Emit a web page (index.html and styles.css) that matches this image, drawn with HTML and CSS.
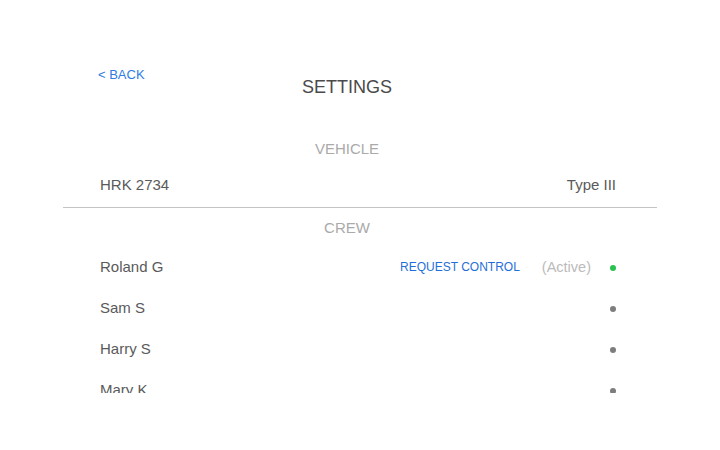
FILE: index.html
```html
<!DOCTYPE html>
<html lang="en">
<head>
    <meta charset="UTF-8">
    <meta name="viewport" content="width=device-width, initial-scale=1.0">
    <title>Settings</title>
    <link rel="stylesheet" href="styles.css">
</head>
<body>
    <div class="panel">
        <div class="header">
            <a class="back" href="#">&lt; BACK</a>
            <h1>SETTINGS</h1>
        </div>

        <h2 class="section-title vehicle-title">VEHICLE</h2>
        <div class="row vehicle-row">
            <span class="name">HRK 2734</span>
            <span class="value">Type III</span>
        </div>

        <h2 class="section-title crew-title">CREW</h2>
        <div class="crew-list">
            <div class="row">
                <span class="name">Roland G</span>
                <a class="request" href="#">REQUEST CONTROL</a>
                <span class="active">(Active)</span>
                <span class="dot online"></span>
            </div>
            <div class="row">
                <span class="name">Sam S</span>
                <span class="dot"></span>
            </div>
            <div class="row">
                <span class="name">Harry S</span>
                <span class="dot"></span>
            </div>
            <div class="row">
                <span class="name">Mary K</span>
                <span class="dot"></span>
            </div>
        </div>
    </div>
</body>
</html>
```

FILE: styles.css
```css
body {
    font-family: "Liberation Sans", Arial, sans-serif;
    margin: 0;
    padding-top: 67px;
    background: #fff;
    color: #5a5a5a;
}
.panel {
    margin: 0 63px;
}
.header {
    display: grid;
    grid-template-columns: 1fr auto 1fr;
    padding-right: 26px;
}
.back {
    margin-left: 35px;
    align-self: start;
    font-size: 13px;
    line-height: 16px;
    color: #2f7be3;
    text-decoration: none;
}
.header h1 {
    margin: 9px 0 0;
    font-size: 18px;
    line-height: 22px;
    font-weight: normal;
    color: #4a4a4a;
}
.section-title {
    margin: 0;
    padding-right: 26px;
    text-align: center;
    font-size: 15px;
    line-height: 20px;
    font-weight: normal;
    color: #aaa;
}
.vehicle-title {
    margin-top: 41px;
}
.crew-title {
    margin-top: 10px;
}
.row {
    display: flex;
    align-items: center;
    padding: 11px 41px 10px 37px;
    font-size: 15px;
    line-height: 20px;
}
.vehicle-row {
    padding-top: 16px;
    padding-bottom: 12px;
    border-bottom: 1px solid #c4c4c4;
}
.name {
    flex: 1;
    color: #5a5a5a;
}
.value {
    color: #5a5a5a;
}
.crew-list {
    height: 147px;
    padding-top: 8px;
    overflow: hidden;
}
.request {
    font-size: 12px;
    color: #1f6fd9;
    text-decoration: none;
    margin-right: 22px;
}
.active {
    font-size: 14.5px;
    color: #bbb;
    margin-right: 19px;
}
.dot {
    width: 6px;
    height: 6px;
    border-radius: 50%;
    background: #7d7d7d;
    margin-top: 2px;
}
.dot.online {
    background: #2ac24f;
}
```
